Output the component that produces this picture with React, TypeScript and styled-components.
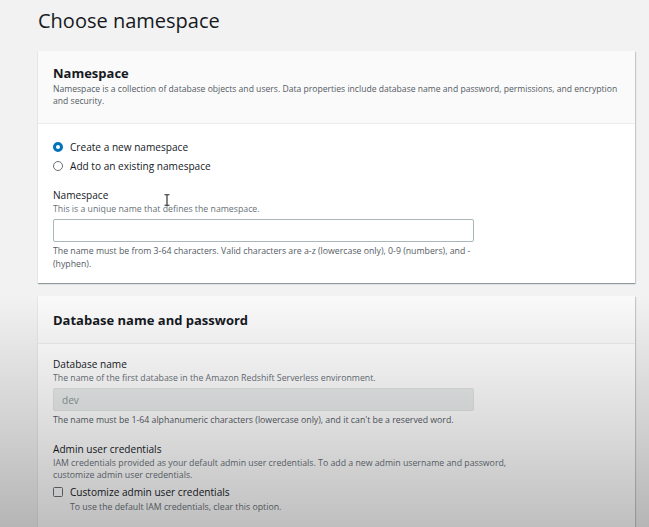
import React from "react";
import styled, { createGlobalStyle } from "styled-components";

const Global = createGlobalStyle`
  html, body { margin: 0; padding: 0; }
  body {
    background: #f2f2f2;
    font-family: "Open Sans", "Liberation Sans", sans-serif;
    color: #16191f;
    overflow: hidden;
  }
  * { box-sizing: border-box; }
`;

const Page = styled.div`
  position: relative;
  width: 649px;
  height: 527px;
  padding: 5px 14px 0 38px;
  overflow: hidden;
  &::after {
    content: "";
    position: absolute;
    inset: 0;
    pointer-events: none;
    background: linear-gradient(
      to bottom,
      rgba(0, 0, 0, 0) 0px,
      rgba(0, 0, 0, 0) 295px,
      rgba(0, 0, 0, 0.07) 360px,
      rgba(0, 0, 0, 0.14) 430px,
      rgba(0, 0, 0, 0.25) 527px
    );
  }
`;

const Title = styled.h1`
  margin: 0 0 14px 0;
  font-size: 20px;
  line-height: 32px;
  font-weight: 400;
  color: #16191f;
`;

const Card = styled.section`
  width: 597px;
  background: #ffffff;
  box-shadow: 0 1px 1px 0 rgba(0, 28, 36, 0.3), 1px 1px 1px 0 rgba(0, 28, 36, 0.15);
  margin-bottom: 13px;
`;

const CardHeader = styled.header<{ $tall?: boolean }>`
  background: #fafafa;
  border-bottom: 1px solid #eaeded;
  padding: ${(p) => (p.$tall ? "15px 15px 14px" : "13px 8px 16px 15px")};
  min-height: ${(p) => (p.$tall ? "47px" : "auto")};
`;

const CardTitle = styled.h2`
  margin: 0;
  font-size: 13px;
  line-height: 18px;
  font-weight: 700;
  color: #16191f;
`;

const CardDesc = styled.p`
  margin: 1px 0 0;
  font-size: 8.6px;
  line-height: 12px;
  color: #545b64;
`;

const CardBody = styled.div<{ $top: number; $bottom: number }>`
  padding: ${(p) => `${p.$top}px 15px ${p.$bottom}px`};
  display: flex;
  flex-direction: column;
`;

const RadioGroup = styled.div`
  display: flex;
  flex-direction: column;
  gap: 5px;
  margin-bottom: 15px;
`;

const OptionRow = styled.label`
  display: flex;
  align-items: center;
  gap: 7px;
  font-size: 10.1px;
  line-height: 14px;
  color: #16191f;
`;

const Radio = styled.span<{ $checked?: boolean }>`
  width: 10px;
  height: 10px;
  border-radius: 50%;
  flex: none;
  border: ${(p) => (p.$checked ? "3px solid #0073bb" : "1.2px solid #687078")};
  background: #fff;
`;

const Checkbox = styled.span`
  width: 10px;
  height: 10px;
  border-radius: 1.5px;
  border: 1.2px solid #687078;
  flex: none;
  background: #fff;
`;

const Field = styled.div<{ $gapTop?: number }>`
  display: flex;
  flex-direction: column;
  margin-top: ${(p) => p.$gapTop ?? 0}px;
`;

const Label = styled.div`
  font-size: 10.1px;
  line-height: 14px;
  color: #16191f;
`;

const Help = styled.div`
  font-size: 8.75px;
  line-height: 12px;
  color: #687078;
  margin-top: 1px;
`;

const Input = styled.div<{ $disabled?: boolean }>`
  width: 421px;
  height: 23px;
  margin-top: 4px;
  border: 1px solid ${(p) => (p.$disabled ? "#e3e3e3" : "#aab7b8")};
  background: ${(p) => (p.$disabled ? "#eaeded" : "#fff")};
  border-radius: 2px;
  padding: 0 8px;
  display: flex;
  align-items: center;
  font-size: 10.1px;
  color: #879596;
`;

const Constraint = styled.div`
  margin-top: 3px;
  font-size: 8.75px;
  line-height: 13px;
  color: #545b64;
  max-width: 430px;
`;

const CheckRow = styled(OptionRow)`
  margin-top: 4px;
`;

const CheckSub = styled.div`
  padding-left: 17px;
  font-size: 8.75px;
  line-height: 12px;
  color: #687078;
  margin-top: 2px;
`;

const Cursor = styled.svg`
  position: absolute;
  left: 164px;
  top: 194px;
  pointer-events: none;
`;

export default function App() {
  return (
    <>
      <Global />
      <Page>
        <Title>Choose namespace</Title>
        <Card>
          <CardHeader>
            <CardTitle>Namespace</CardTitle>
            <CardDesc>
              Namespace is a collection of database objects and users. Data properties include database name and
              password, permissions, and encryption and security.
            </CardDesc>
          </CardHeader>
          <CardBody $top={16} $bottom={12}>
            <RadioGroup>
              <OptionRow>
                <Radio $checked />
                Create a new namespace
              </OptionRow>
              <OptionRow>
                <Radio />
                Add to an existing namespace
              </OptionRow>
            </RadioGroup>
            <Field>
              <Label>Namespace</Label>
              <Help>This is a unique name that defines the namespace.</Help>
              <Input />
              <Constraint>
                The name must be from 3-64 characters. Valid characters are a-z (lowercase only), 0-9 (numbers), and -
                (hyphen).
              </Constraint>
            </Field>
          </CardBody>
        </Card>
        <Card>
          <CardHeader $tall>
            <CardTitle>Database name and password</CardTitle>
          </CardHeader>
          <CardBody $top={13} $bottom={15}>
            <Field>
              <Label>Database name</Label>
              <Help>The name of the first database in the Amazon Redshift Serverless environment.</Help>
              <Input $disabled>dev</Input>
              <Constraint>
                The name must be 1-64 alphanumeric characters (lowercase only), and it can't be a reserved word.
              </Constraint>
            </Field>
            <Field $gapTop={15}>
              <Label>Admin user credentials</Label>
              <Help>
                IAM credentials provided as your default admin user credentials. To add a new admin username and
                password,
                <br />
                customize admin user credentials.
              </Help>
              <CheckRow>
                <Checkbox />
                Customize admin user credentials
              </CheckRow>
              <CheckSub>To use the default IAM credentials, clear this option.</CheckSub>
            </Field>
          </CardBody>
        </Card>
        <Cursor width="6" height="12" viewBox="0 0 6 12">
          <path d="M0.5 0.8h5M0.5 11.2h5M3 0.8v10.4" stroke="#222" strokeWidth="1.1" fill="none" />
        </Cursor>
      </Page>
    </>
  );
}
